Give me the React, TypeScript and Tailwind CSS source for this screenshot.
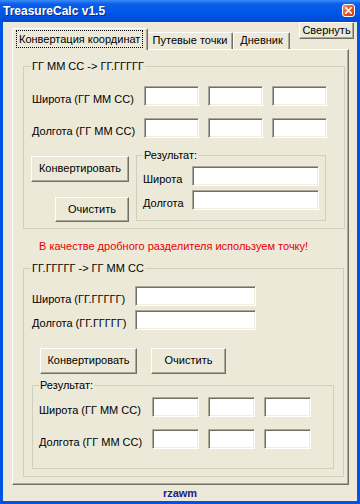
import React from 'react';

const field =
  'bg-white border border-t-[#aca899] border-l-[#aca899] border-b-white border-r-white shadow-[inset_1px_1px_0_#716f64,inset_-1px_-1px_0_#f1efe2]';

const btn =
  'bg-[#ece9d8] border border-t-white border-l-white border-r-[#716f64] border-b-[#716f64] shadow-[inset_-1px_-1px_0_#aca899] flex items-center justify-center leading-none text-black';

const group = 'border border-[#d0d0bf] min-w-0';
const legend = 'leading-[13px] px-px';

function Field({ w, h = 20 }: { w: number; h?: number }) {
  return <div className={field} style={{ width: w, height: h }} />;
}

function Row({ label, labelW, inputs, inputW, className = '' }: { label: string; labelW: number; inputs: number; inputW: number; className?: string }) {
  return (
    <div className={'flex items-end ' + className}>
      <div className="whitespace-nowrap leading-[13px]" style={{ width: labelW }}>{label}</div>
      <div className="flex gap-[9px]">
        {Array.from({ length: inputs }).map((_, i) => (
          <Field key={i} w={inputW} />
        ))}
      </div>
    </div>
  );
}

export default function App() {
  return (
    <div className="w-[360px] h-[504px] flex flex-col bg-[#0054e3] font-['Liberation_Sans',Arial,sans-serif] text-[11px] text-black select-none">
      {/* Title bar */}
      <div className="h-[22px] flex items-center justify-between pl-[3px] pr-[5px] bg-[linear-gradient(to_bottom,#3a8cf8,#0a5ee9_18%,#0056e6_60%,#0049d3)]">
        <span className="text-white font-bold text-[12px] [text-shadow:1px_1px_0_#0a2a8a]">TreasureCalc v1.5</span>
        <div className="w-[13px] h-[13px] rounded-[3px] border border-white bg-[linear-gradient(135deg,#f0916c,#e0542a_55%,#c4401c)] flex items-center justify-center">
          <svg width="7" height="7" viewBox="0 0 7 7">
            <path d="M0.8 0.8 L6.2 6.2 M6.2 0.8 L0.8 6.2" stroke="#fff" strokeWidth="1.6" strokeLinecap="square" />
          </svg>
        </div>
      </div>

      {/* Client area */}
      <div className="flex-1 mx-[3px] mb-[3px] bg-[#ece9d8] flex flex-col">
        {/* Tabs row */}
        <div className="h-[27px] flex justify-between items-start shrink-0">
          <div className="self-end flex items-end pl-[9px]">
            <div className="relative z-10 -mb-px w-[136px] h-[22px] bg-[#ece9d8] border-t border-l border-r border-t-white border-l-white border-r-[#716f64] shadow-[inset_-1px_0_0_#aca899] rounded-t-[2px] flex items-center pl-[3px]">
              <span className="border border-dotted border-black px-[2px] h-[18px] flex items-center whitespace-nowrap">Конвертация координат</span>
            </div>
            <div className="w-[85px] h-[17px] border-t border-r border-t-white border-r-[#716f64] shadow-[inset_-1px_0_0_#aca899] rounded-t-[2px] flex items-center justify-center whitespace-nowrap">
              Путевые точки
            </div>
            <div className="w-[57px] h-[17px] border-t border-l border-r border-t-white border-l-white border-r-[#716f64] shadow-[inset_-1px_0_0_#aca899] rounded-t-[2px] flex items-center justify-center whitespace-nowrap">
              Дневник
            </div>
          </div>
          <button className={btn + ' w-[55px] h-[17px] mr-[3px]'}>Свернуть</button>
        </div>

        {/* Tab panel */}
        <div className="ml-[9px] w-[337px] h-[436px] shrink-0 border border-t-white border-l-white border-r-[#716f64] border-b-[#716f64] shadow-[inset_-1px_-1px_0_#aca899]">
          {/* Group 1 */}
          <fieldset className={group + ' ml-[10px] mt-[10px] w-[322px] h-[169px]'}>
            <legend className={legend + ' ml-[7px]'}>ГГ ММ СС -&gt; ГГ.ГГГГГ</legend>
            <Row className="mt-[13px] pl-[8px]" label="Широта (ГГ ММ СС)" labelW={112} inputs={3} inputW={55} />
            <Row className="mt-[12px] pl-[8px]" label="Долгота (ГГ ММ СС)" labelW={112} inputs={3} inputW={55} />
            <div className="mt-[11px] flex items-start">
              <div className="ml-[7px] w-[98px] flex flex-col items-end">
                <button className={btn + ' mt-[7px] w-[98px] h-[26px]'}>Конвертировать</button>
                <button className={btn + ' mt-[15px] w-[74px] h-[25px]'}>Очистить</button>
              </div>
              <fieldset className={group + ' ml-[7px] w-[190px] h-[72px]'}>
                <legend className={legend + ' ml-[6px]'}>Результат:</legend>
                <Row className="mt-[4px] pl-[6px]" label="Широта" labelW={49} inputs={1} inputW={127} />
                <Row className="mt-[4px] pl-[6px]" label="Долгота" labelW={49} inputs={1} inputW={127} />
              </fieldset>
            </div>
          </fieldset>

          <div className="mt-[11px] pl-[26px] leading-[13px] text-[#e80000] whitespace-nowrap">
            В качестве дробного разделителя используем точку!
          </div>

          {/* Group 2 */}
          <fieldset className={group + ' ml-[10px] mt-[9px] w-[321px] h-[215px]'}>
            <legend className={legend + ' ml-[7px]'}>ГГ.ГГГГГ -&gt; ГГ ММ СС</legend>
            <Row className="mt-[11px] pl-[8px]" label="Широта (ГГ.ГГГГГ)" labelW={103} inputs={1} inputW={121} />
            <Row className="mt-[4px] pl-[8px]" label="Долгота (ГГ.ГГГГГ)" labelW={103} inputs={1} inputW={121} />
            <div className="mt-[18px] pl-[16px] flex gap-[14px]">
              <button className={btn + ' w-[97px] h-[26px]'}>Конвертировать</button>
              <button className={btn + ' w-[75px] h-[26px]'}>Очистить</button>
            </div>
            <fieldset className={group + ' mt-[5px] ml-[8px] w-[302px] h-[90px]'}>
              <legend className={legend + ' ml-[6px]'}>Результат:</legend>
              <Row className="mt-[5px] pl-[6px]" label="Широта (ГГ ММ СС)" labelW={113} inputs={3} inputW={47} />
              <Row className="mt-[12px] pl-[6px]" label="Долгота (ГГ ММ СС)" labelW={113} inputs={3} inputW={47} />
            </fieldset>
          </fieldset>
        </div>

        <div className="flex-1 flex items-center justify-center font-bold text-[#1c2288]">rzawm</div>
      </div>
    </div>
  );
}
